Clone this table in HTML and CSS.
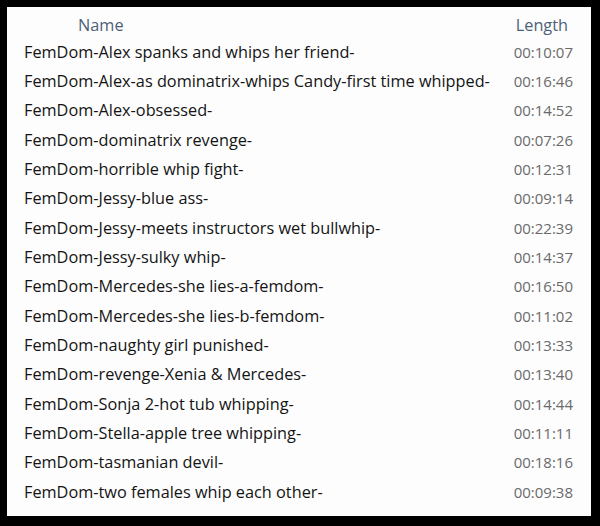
FILE: index.html
```html
<!DOCTYPE html>
<html lang="en">
<head>
  <meta charset="UTF-8">
  <title>File list</title>
  <link rel="stylesheet" href="styles.css">
</head>
<body>
  <div class="frame">
    <table class="files">
      <tr>
        <th class="name">Name</th>
        <th class="len">Length</th>
      </tr>
      <tr><td class="name">FemDom-Alex spanks and whips her friend-</td><td class="len">00:10:07</td></tr>
      <tr><td class="name">FemDom-Alex-as dominatrix-whips Candy-first time whipped-</td><td class="len">00:16:46</td></tr>
      <tr><td class="name">FemDom-Alex-obsessed-</td><td class="len">00:14:52</td></tr>
      <tr><td class="name">FemDom-dominatrix revenge-</td><td class="len">00:07:26</td></tr>
      <tr><td class="name">FemDom-horrible whip fight-</td><td class="len">00:12:31</td></tr>
      <tr><td class="name">FemDom-Jessy-blue ass-</td><td class="len">00:09:14</td></tr>
      <tr><td class="name">FemDom-Jessy-meets instructors wet bullwhip-</td><td class="len">00:22:39</td></tr>
      <tr><td class="name">FemDom-Jessy-sulky whip-</td><td class="len">00:14:37</td></tr>
      <tr><td class="name">FemDom-Mercedes-she lies-a-femdom-</td><td class="len">00:16:50</td></tr>
      <tr><td class="name">FemDom-Mercedes-she lies-b-femdom-</td><td class="len">00:11:02</td></tr>
      <tr><td class="name">FemDom-naughty girl punished-</td><td class="len">00:13:33</td></tr>
      <tr><td class="name">FemDom-revenge-Xenia &amp; Mercedes-</td><td class="len">00:13:40</td></tr>
      <tr><td class="name">FemDom-Sonja 2-hot tub whipping-</td><td class="len">00:14:44</td></tr>
      <tr><td class="name">FemDom-Stella-apple tree whipping-</td><td class="len">00:11:11</td></tr>
      <tr><td class="name">FemDom-tasmanian devil-</td><td class="len">00:18:16</td></tr>
      <tr><td class="name">FemDom-two females whip each other-</td><td class="len">00:09:38</td></tr>
    </table>
  </div>
</body>
</html>
```

FILE: styles.css
```css
html, body {
  margin: 0;
  background: #000;
}
body {
  padding: 7px 9px 10px 7px;
  font-family: "Open Sans", sans-serif;
}
.frame {
  background: #fdfdfd;
  height: 509px;
  padding: 0 18px 0 17px;
}
.files {
  width: 100%;
  border-collapse: collapse;
}
th {
  font-weight: normal;
  font-size: 16.3px;
  color: #4d5f78;
  height: 29px;
  vertical-align: bottom;
  padding: 0 0 1px 0;
}
th.name {
  text-align: left;
  padding-left: 54px;
}
th.len {
  text-align: right;
  padding-right: 5px;
}
td {
  height: 29.35px;
  padding: 0;
}
td.name {
  font-size: 16.3px;
  color: #141414;
}
td.len {
  font-size: 15px;
  color: #6a6a6a;
  text-align: right;
}
```
